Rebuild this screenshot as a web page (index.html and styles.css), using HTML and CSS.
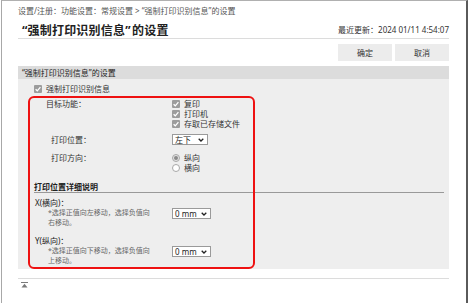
FILE: index.html
```html
<!DOCTYPE html>
<html lang="zh-CN">
<head>
<meta charset="utf-8">
<title>强制打印识别信息</title>
<link rel="stylesheet" href="styles.css">
</head>
<body>
<div class="window">
  <div class="page">
    <div class="crumb">设置/注册：功能设置：常规设置 &gt; “强制打印识别信息”的设置</div>
    <div class="head">
      <h1 class="title">“强制打印识别信息”&#8202;的设置</h1>
      <div class="updated">最近更新：2024 01/11 4:54:07</div>
    </div>
    <div class="actions">
      <button class="btn">确定</button>
      <button class="btn">取消</button>
    </div>
    <section class="panel">
      <div class="panel-title">“强制打印识别信息”的设置</div>
      <div class="panel-body">
        <div class="check main"><span class="cb"><svg viewBox="0 0 8 8"><path d="M1.6 4.2 L3.3 5.8 L6.4 2.2" /></svg></span>强制打印识别信息</div>

        <div class="row targets">
          <div class="label">目标功能：</div>
          <div class="value">
            <div class="check"><span class="cb"><svg viewBox="0 0 8 8"><path d="M1.6 4.2 L3.3 5.8 L6.4 2.2" /></svg></span>复印</div>
            <div class="check"><span class="cb"><svg viewBox="0 0 8 8"><path d="M1.6 4.2 L3.3 5.8 L6.4 2.2" /></svg></span>打印机</div>
            <div class="check"><span class="cb"><svg viewBox="0 0 8 8"><path d="M1.6 4.2 L3.3 5.8 L6.4 2.2" /></svg></span>存取已存储文件</div>
          </div>
        </div>

        <div class="row pos">
          <div class="label">打印位置：</div>
          <div class="value">
            <div class="select w36"><span>左下</span><svg class="chev" viewBox="0 0 6 4"><path d="M0.7 0.8 L3 3 L5.3 0.8" /></svg></div>
          </div>
        </div>

        <div class="row dir">
          <div class="label">打印方向：</div>
          <div class="value">
            <div class="radio"><span class="rb on"></span>纵向</div>
            <div class="radio"><span class="rb"></span>横向</div>
          </div>
        </div>

        <div class="subhead">打印位置详细说明</div>

        <div class="detail x">
          <div class="dl">
            <div class="dlabel">X(横向)：</div>
            <div class="note">*选择正值向左移动，选择负值向右移动。</div>
          </div>
          <div class="select w39"><span>0 mm</span><svg class="chev" viewBox="0 0 6 4"><path d="M0.7 0.8 L3 3 L5.3 0.8" /></svg></div>
        </div>

        <div class="detail y">
          <div class="dl">
            <div class="dlabel">Y(纵向)：</div>
            <div class="note">*选择正值向下移动，选择负值向上移动。</div>
          </div>
          <div class="select w39"><span>0 mm</span><svg class="chev" viewBox="0 0 6 4"><path d="M0.7 0.8 L3 3 L5.3 0.8" /></svg></div>
        </div>

        <div class="annot"></div>
      </div>
    </section>
    <div class="foot">
      <svg class="top-icon" viewBox="0 0 7 6"><rect x="0" y="0" width="7" height="1" /><path d="M3.5 1.8 L6.5 5.5 L0.5 5.5 Z" /></svg>
    </div>
  </div>
</div>
</body>
</html>
```
FILE: styles.css
```css
* { box-sizing: border-box; }
html, body { margin: 0; padding: 0; background: #fff; }
body {
  font-family: "Noto Sans", "Noto Sans CJK SC", sans-serif;
  color: #333;
  font-size: 8px;
}
.window {
  margin-left: 1px;
  width: 467px;
  height: 303px;
  border-left: 1px solid #a8a8a8;
  border-top: 1px solid #b0b0b0;
  border-right: 2px solid #5a5a5a;
  overflow: hidden;
}
.page {
  padding: 4px 17px 0 16px;
}
.crumb {
  font-size: 8px;
  line-height: 12px;
  color: #555;
  white-space: nowrap;
}
.head {
  display: flex;
  justify-content: space-between;
  align-items: flex-end;
  padding-top: 7px;
  border-bottom: 1px solid #dcdcdc;
}
.title {
  margin: 0;
  font-size: 12px;
  line-height: 14px;
  font-weight: bold;
  color: #222;
  padding-left: 4px;
  letter-spacing: 0.2px;
}
.updated {
  font-size: 8px;
  line-height: 11px;
  margin-bottom: 3px;
  color: #333;
}
.actions {
  display: flex;
  justify-content: flex-end;
  gap: 3px;
  margin-top: 5px;
}
.btn {
  width: 54px;
  height: 17px;
  border: none;
  background: #ececec;
  font-family: inherit;
  font-size: 8px;
  color: #333;
  padding: 0;
}
.panel {
  margin-top: 5px;
}
.panel-title {
  background: #dcdcdc;
  height: 13px;
  line-height: 13px;
  padding-left: 4px;
  font-size: 8px;
  color: #222;
}
.panel-body {
  position: relative;
  background: #eeeeee;
  padding: 5px 0 3px 0;
}
.check {
  display: flex;
  align-items: center;
  line-height: 10px;
  height: 10px;
}
.cb {
  width: 8px;
  height: 8px;
  border-radius: 1px;
  background: #9c9c9c;
  margin-right: 4px;
  display: inline-flex;
}
.cb svg {
  width: 8px;
  height: 8px;
  fill: none;
  stroke: #fff;
  stroke-width: 1.3;
}
.check.main {
  padding-left: 16px;
}
.row {
  display: grid;
  grid-template-columns: 154px auto;
}
.label {
  line-height: 10px;
}
.targets { margin-top: 5px; }
.targets .label { padding-left: 28px; }
.pos { margin-top: 5px; }
.pos .label { padding-left: 33px; line-height: 11px; }
.dir { margin-top: 8px; }
.dir .label { padding-left: 33px; }
.select {
  height: 11px;
  background: #fff;
  border: 1px solid #9a9a9a;
  display: flex;
  align-items: center;
  justify-content: space-between;
  padding: 0 3px 0 2px;
  font-size: 8px;
  line-height: 9px;
  color: #222;
}
.w36 { width: 36px; }
.w39 { width: 39px; }
.chev {
  width: 6px;
  height: 4px;
  fill: none;
  stroke: #222;
  stroke-width: 1.3;
}
.radio {
  display: flex;
  align-items: center;
  height: 10px;
  line-height: 10px;
}
.rb {
  width: 8px;
  height: 8px;
  border-radius: 50%;
  border: 1px solid #a8a8a8;
  background: #fff;
  margin-right: 4px;
  position: relative;
}
.rb.on {
  background: #e4e4e4;
}
.rb.on::after {
  content: "";
  position: absolute;
  left: 1px;
  top: 1px;
  width: 4px;
  height: 4px;
  border-radius: 50%;
  background: #8a8a8a;
}
.subhead {
  margin: 8px 5px 0 16px;
  font-weight: bold;
  line-height: 11px;
  border-bottom: 1px solid #999;
  color: #222;
}
.detail {
  display: grid;
  grid-template-columns: 154px auto;
  align-items: start;
}
.detail.x { margin-top: 5px; }
.detail.y { margin-top: 8px; }
.dl { padding-left: 17px; }
.dlabel { line-height: 10px; color: #222; }
.note {
  margin-left: 13px;
  width: 108px;
  font-size: 7px;
  line-height: 10px;
  color: #666;
}
.detail .select { margin-top: 10px; }
.annot {
  position: absolute;
  left: 10px;
  top: 17px;
  width: 227px;
  bottom: 0;
  border: 2px solid #ee1111;
  border-radius: 6px;
  pointer-events: none;
}
.foot {
  margin-top: 9px;
  border-top: 1px solid #dcdcdc;
  padding: 3px 0 0 3px;
}
.top-icon {
  display: block;
  width: 7px;
  height: 6px;
  fill: #7a7a7a;
}
```
